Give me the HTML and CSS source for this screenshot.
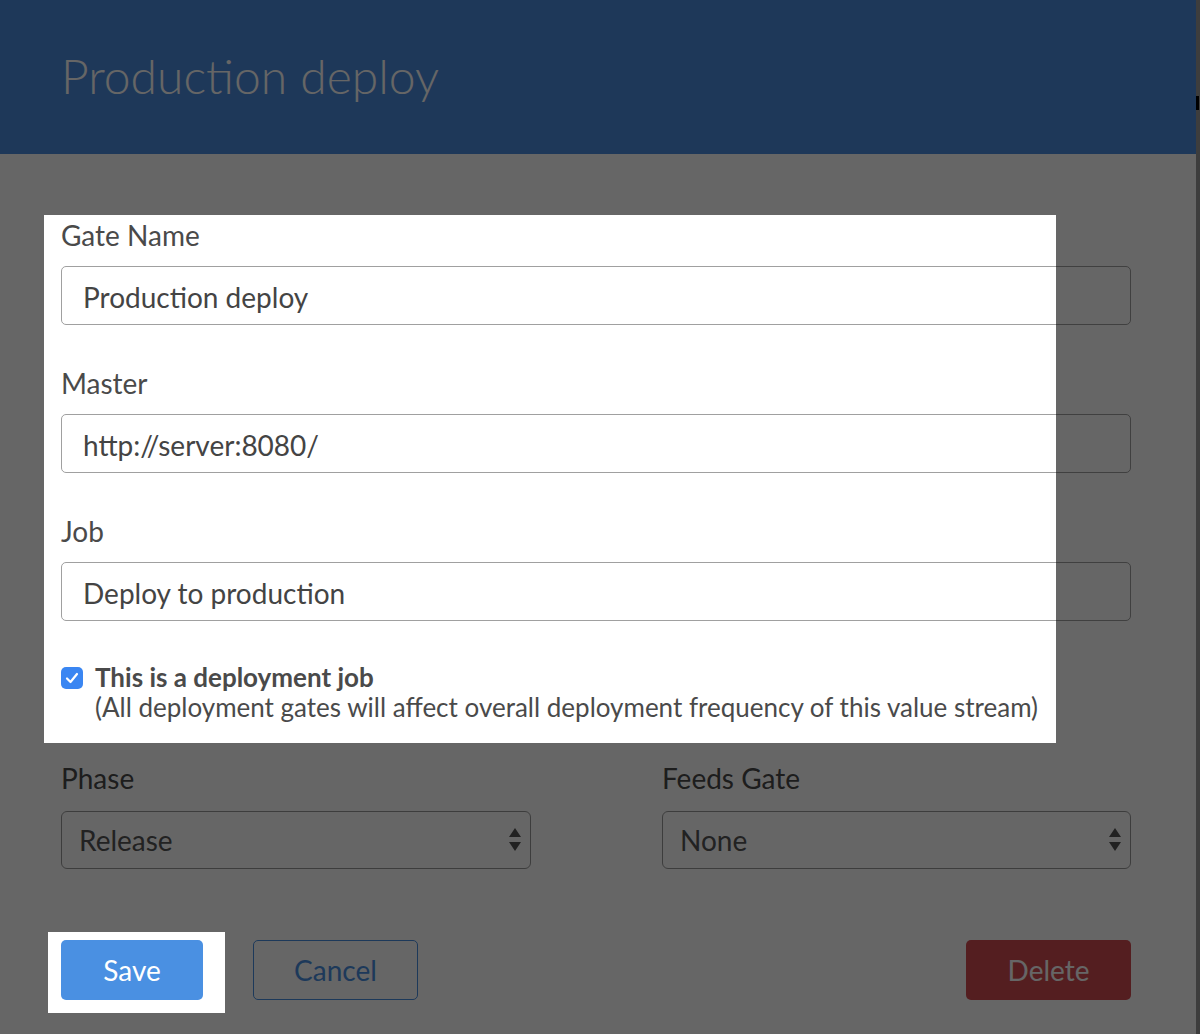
FILE: index.html
```html
<!DOCTYPE html>
<html>
<head>
<meta charset="utf-8">
<link rel="stylesheet" href="styles.css">
</head>
<body>
<div class="modal">
  <div class="modal-header">
    <h1 class="modal-title">Production deploy</h1>
  </div>
  <form class="modal-body">
    <div class="field">
      <label class="label">Gate Name</label>
      <div class="input">Production deploy</div>
    </div>
    <div class="field">
      <label class="label">Master</label>
      <div class="input">http://server:8080/</div>
    </div>
    <div class="field">
      <label class="label">Job</label>
      <div class="input">Deploy to production</div>
    </div>
    <div class="check-row">
      <span class="checkbox">
        <svg viewBox="0 0 22 22" width="22" height="22"><path d="M6 11.5 L9.5 15 L16 7" fill="none" stroke="#fff" stroke-width="2.2" stroke-linecap="round" stroke-linejoin="round"/></svg>
      </span>
      <div class="check-text">
        <div class="check-title">This is a deployment job</div>
        <div class="check-desc">(All deployment gates will affect overall deployment frequency of this value stream)</div>
      </div>
    </div>
    <div class="two-col">
      <div class="col">
        <label class="label">Phase</label>
        <div class="select">
          <span>Release</span>
          <svg class="arrows" viewBox="0 0 14 26" width="14" height="26"><path d="M7 1 L13 10 H1 Z M1 15 H13 L7 24 Z" fill="#555"/></svg>
        </div>
      </div>
      <div class="col">
        <label class="label">Feeds Gate</label>
        <div class="select">
          <span>None</span>
          <svg class="arrows" viewBox="0 0 14 26" width="14" height="26"><path d="M7 1 L13 10 H1 Z M1 15 H13 L7 24 Z" fill="#555"/></svg>
        </div>
      </div>
    </div>
    <div class="actions">
      <div class="actions-left">
        <button type="button" class="btn btn-primary">Save</button>
        <button type="button" class="btn btn-outline">Cancel</button>
      </div>
      <button type="button" class="btn btn-danger">Delete</button>
    </div>
  </form>
</div>
<div class="page-edge"><span class="edge-mark"></span></div>
<svg class="tour-overlay" width="1200" height="1034" viewBox="0 0 1200 1034">
  <path fill-rule="evenodd" fill="rgba(0,0,0,0.6)" d="M0 0H1200V1034H0Z M44 215H1056V743H44Z M48 932H225V1013H48Z"/>
</svg>
</body>
</html>
```

FILE: styles.css
```css
html, body {
  margin: 0;
  padding: 0;
}
body {
  width: 1200px;
  height: 1034px;
  overflow: hidden;
  display: flex;
  background: #9a9a9a;
  font-family: Lato, "Open Sans", "Liberation Sans", sans-serif;
  color: #4a4a4a;
}
.modal {
  width: 1196px;
  height: 1034px;
  background: #ffffff;
  flex: none;
}
.modal-header {
  height: 154px;
  background: #4b8cde;
  padding-left: 61px;
  box-sizing: border-box;
  display: flex;
  align-items: center;
}
.modal-title {
  margin: 0;
  font-weight: 300;
  font-size: 48px;
  color: #ffffff;
  line-height: 1;
  padding-bottom: 2px;
}
.modal-body {
  padding: 65px 65px 0 61px;
  display: flex;
  flex-direction: column;
}
.field {
  display: flex;
  flex-direction: column;
  margin-bottom: 42px;
}
.label {
  font-size: 28px;
  line-height: 32px;
  color: #4a4a4a;
  margin-bottom: 15px;
}
.input {
  height: 59px;
  box-sizing: border-box;
  border: 1px solid #a0a0a0;
  border-radius: 5px;
  padding: 0 21px;
  font-size: 28px;
  display: flex;
  align-items: center;
  color: #444;
  padding-top: 2px;
}
.check-row {
  display: flex;
  align-items: flex-start;
  gap: 12px;
  margin-top: -1px;
}
.checkbox {
  width: 22px;
  height: 22px;
  border-radius: 5px;
  background: #3a86f2;
  display: flex;
  flex: none;
  margin-top: 5px;
}
.check-text {
  font-size: 26px;
  line-height: 30px;
  color: #4a4a4a;
}
.check-title {
  font-weight: 700;
}
.two-col {
  display: grid;
  grid-template-columns: 470px 469px;
  justify-content: space-between;
  margin-top: 40px;
}
.col {
  display: flex;
  flex-direction: column;
}
.col .label {
  margin-bottom: 17px;
}
.select {
  height: 58px;
  box-sizing: border-box;
  border: 1px solid #9a9a9a;
  border-radius: 6px;
  padding: 0 8px 0 17px;
  font-size: 28px;
  color: #555;
  display: flex;
  align-items: center;
  justify-content: space-between;
}
.arrows {
  display: block;
}
.actions {
  display: flex;
  justify-content: space-between;
  margin-top: 71px;
}
.actions-left {
  display: flex;
  gap: 50px;
}
.btn {
  font-family: inherit;
  font-size: 28px;
  height: 60px;
  border-radius: 5px;
  border: 1px solid transparent;
  padding: 0;
  cursor: pointer;
}
.btn-primary {
  width: 142px;
  background: #4a90e2;
  color: #ffffff;
}
.btn-outline {
  width: 165px;
  background: transparent;
  border-color: #4a90e2;
  color: #4a90e2;
}
.btn-danger {
  width: 165px;
  background: #d24b50;
  color: #ffffff;
}
.page-edge {
  width: 4px;
  height: 1034px;
  flex: none;
  display: flex;
  flex-direction: column;
}
.edge-mark {
  display: block;
  width: 3px;
  height: 14px;
  margin-top: 96px;
  background: #000;
}
.tour-overlay {
  position: absolute;
  left: 0;
  top: 0;
  pointer-events: none;
}
```
